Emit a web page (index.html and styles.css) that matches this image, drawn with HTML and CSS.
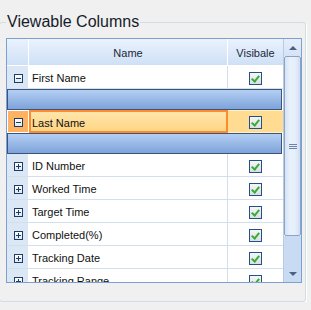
FILE: index.html
```html
<!DOCTYPE html>
<html lang="en">
<head>
  <meta charset="UTF-8">
  <title>Viewable Columns</title>
  <link rel="stylesheet" href="styles.css">
</head>
<body>

  <fieldset class="groupbox">
    <legend>Viewable Columns</legend>

    <div class="grid">
      <div class="grid-body">
        <div class="row header">
          <div class="cell ind"></div>
          <div class="cell name">Name</div>
          <div class="cell vis">Visibale</div>
        </div>

        <div class="row">
          <div class="cell ind"><span class="expander"></span></div>
          <div class="cell name">First Name</div>
          <div class="cell vis"><span class="check"></span></div>
        </div>
        <div class="group-row"></div>

        <div class="row current">
          <div class="cell ind"><span class="expander"></span></div>
          <div class="cell name">Last Name</div>
          <div class="cell vis"><span class="check"></span></div>
        </div>
        <div class="group-row"></div>

        <div class="row">
          <div class="cell ind"><span class="expander plus"></span></div>
          <div class="cell name">ID Number</div>
          <div class="cell vis"><span class="check"></span></div>
        </div>
        <div class="row">
          <div class="cell ind"><span class="expander plus"></span></div>
          <div class="cell name">Worked Time</div>
          <div class="cell vis"><span class="check"></span></div>
        </div>
        <div class="row">
          <div class="cell ind"><span class="expander plus"></span></div>
          <div class="cell name">Target Time</div>
          <div class="cell vis"><span class="check"></span></div>
        </div>
        <div class="row">
          <div class="cell ind"><span class="expander plus"></span></div>
          <div class="cell name">Completed(%)</div>
          <div class="cell vis"><span class="check"></span></div>
        </div>
        <div class="row">
          <div class="cell ind"><span class="expander plus"></span></div>
          <div class="cell name">Tracking Date</div>
          <div class="cell vis"><span class="check"></span></div>
        </div>
        <div class="row">
          <div class="cell ind"><span class="expander plus"></span></div>
          <div class="cell name">Tracking Range</div>
          <div class="cell vis"><span class="check"></span></div>
        </div>
      </div>

      <div class="scrollbar">
        <div class="sb-btn"><span class="arrow up"></span></div>
        <div class="sb-thumb"><span class="grip"></span></div>
        <div class="sb-track">
          <div class="sb-btn down"><span class="arrow dn"></span></div>
        </div>
      </div>
    </div>
  </fieldset>

</body>
</html>
```

FILE: styles.css
```css
* { box-sizing: border-box; }

body {
  margin: 0;
  background-color: #f0f0f0;
  font-family: "Liberation Sans", Arial, sans-serif;
  font-size: 11px;
  color: #101010;
}

/* group box */
.groupbox {
  margin: 13px 5px 0 -1px;
  padding: 7px 3px 0 6px;
  height: 289px;
  border: 1px solid #d3dbe3;
  border-radius: 3px;
  box-shadow: 1px 1px 0 #fff;
  min-width: 0;
}
.groupbox legend {
  padding: 0 1px;
  font-size: 16px;
  line-height: 18px;
  color: #151b2a;
}

/* grid */
.grid {
  display: flex;
  height: 245px;
  border: 1px solid #7ca0d2;
  background-color: #fff;
}
.grid-body {
  width: 277px;
  overflow: hidden;
  border-right: 1px solid #b8cbe3;
}

.row { display: flex; height: 23px; border-bottom: 1px solid #d4dfee; }
.cell { display: flex; align-items: center; padding-top: 2px; }
.cell.ind {
  width: 22px;
  justify-content: center;
  padding-left: 1px;
  background-color: #dce7f6;
  border-right: 1px solid #fff;
}
.cell.name { width: 199px; padding-left: 3px; border-right: 1px solid #d4dfee; }
.cell.vis { width: 55px; justify-content: center; }

.row.header {
  height: 27px;
  background: linear-gradient(#eaf2fd, #cfe0f6);
  border-bottom: 1px solid #fff;
  color: #202838;
}
.header .cell { background: transparent; padding-top: 1px; }
.header .cell.ind { border-right: 1px solid #fff; }
.header .cell.name { justify-content: center; padding-left: 0; border-right: 1px solid #fff; }

.group-row {
  height: 21px;
  margin-right: 1px;
  border: 1px solid #3d5479;
  background: linear-gradient(#b3cff3, #7ea3da);
}

/* current row */
.row.current { border-bottom: 0; }
.current .cell.ind { background-color: #ffb262; box-shadow: inset 0 0 0 1px #fff; border-right: 0; width: 22px; }
.current .cell.name {
  background: linear-gradient(#ffe5ab, #ffd585);
  border: 2px solid #ff8b2c;
  padding-left: 1px;
}
.current .cell.vis {
  background-color: #ffdc92;
  border-top: 1px solid #fff1c6;
  border-bottom: 1px solid #fff1c6;
}

/* expander box */
.expander {
  position: relative;
  width: 9px;
  height: 9px;
  border: 1px solid #1d3c66;
  background: linear-gradient(#fff, #dfe7f2);
}
.expander::before {
  content: "";
  position: absolute;
  left: 1px; top: 3px;
  width: 5px; height: 1px;
  background-color: #1d3c66;
}
.expander.plus::after {
  content: "";
  position: absolute;
  left: 3px; top: 1px;
  width: 1px; height: 5px;
  background-color: #1d3c66;
}

/* check box */
.check {
  position: relative;
  width: 13px;
  height: 13px;
  border: 1px solid #21508a;
  background: linear-gradient(#f6f6f6, #dedede);
}
.check::after {
  content: "";
  position: absolute;
  left: 3px; top: 1px;
  width: 3px; height: 6px;
  border: solid #36ad3c;
  border-width: 0 2px 2px 0;
  transform: rotate(40deg);
}

/* scroll bar */
.scrollbar { width: 17px; display: flex; flex-direction: column; }
.sb-btn {
  height: 17px;
  display: flex;
  align-items: center;
  justify-content: center;
  background: linear-gradient(#e6eefa, #d6e3f6);
}
.sb-btn.down { margin-top: auto; background: transparent; }
.arrow { width: 0; height: 0; border-left: 4px solid transparent; border-right: 4px solid transparent; }
.arrow.up { border-bottom: 4px solid #4b5f82; }
.arrow.dn { border-top: 4px solid #4b5f82; }

.sb-thumb {
  height: 180px;
  display: flex;
  align-items: center;
  justify-content: center;
  border: 1px solid #8ba3c6;
  border-radius: 2px;
  background: linear-gradient(90deg, #d6e3f5, #e9f1fb 35%, #e6eefa 70%, #cfdef3);
}
.grip {
  width: 8px;
  height: 5px;
  border-top: 1px solid #6d84a8;
  border-bottom: 1px solid #6d84a8;
  background: linear-gradient(transparent 1px, #6d84a8 1px, #6d84a8 2px, transparent 2px);
}
.sb-track { flex: 1; display: flex; flex-direction: column; background-color: #c9dbf3; }
```
